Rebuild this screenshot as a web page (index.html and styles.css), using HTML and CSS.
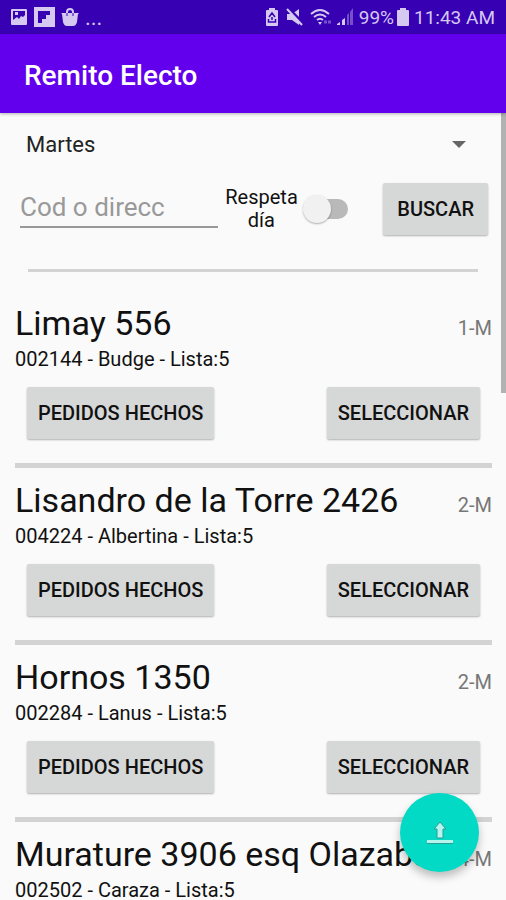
FILE: index.html
```
<!DOCTYPE html>
<html lang="es">
<head>
  <meta charset="UTF-8">
  <meta name="viewport" content="width=device-width, initial-scale=1">
  <title>Remito Electo</title>
  <link rel="stylesheet" href="styles.css">
</head>
<body>
  <div class="status-bar">
    <div class="status-left">
      <svg width="18" height="18" viewBox="0 0 18 18" fill="currentColor"><path fill-rule="evenodd" d="M2 1h14a1 1 0 0 1 1 1v14a1 1 0 0 1-1 1H2a1 1 0 0 1-1-1V2a1 1 0 0 1 1-1zm1 2v9l4-3 2 2 2-3 2 1 2-2V3zM5 4h3v3H5z"/></svg>
      <svg width="21" height="20" viewBox="0 0 21 20" fill="currentColor"><path fill-rule="evenodd" d="M0 0h21v20H0zM4 4v12h4v-4h4V8h4V4z"/></svg>
      <svg width="18" height="19" viewBox="0 0 18 19"><path d="M0 5h18l-1 1-1 8q-1 4-4 4H6q-3 0-4-4L1 6z" fill="currentColor"/><path d="M6 6V4q0-3 3-3t3 3v2" fill="none" stroke="currentColor" stroke-width="2"/><path d="M6 5v3M12 5v3" stroke="#3700b3"/></svg>
      <span class="more">...</span>
    </div>
    <div class="status-right">
      <svg width="14" height="18" viewBox="0 0 14 18"><path d="M4 0h6v2h2q1 0 1 1v14q0 1-1 1H2q-1 0-1-1V3q0-1 1-1h2z" fill="currentColor"/><path d="M4 9l3-4 3 4M3.500 11v3h7v-3M7 9v3" fill="none" stroke="#3700b3" stroke-width="1.500"/></svg>
      <svg class="mute" width="17" height="18" viewBox="0 0 17 18"><path d="M1 6h5l7-5v16l-7-5H1z" fill="currentColor"/><path d="M2 0l15 15" stroke="#3700b3" stroke-width="3"/><path d="M1 1l15 16" stroke="currentColor" stroke-width="2"/></svg>
      <svg class="wifi" width="22" height="18" viewBox="0 0 22 18" fill="none" stroke="currentColor" stroke-width="2"><path d="M1 6q9-8 18 0M4 9q6-5 12 0M7 12q3-2.500 6 0"/><path d="M8 14h4l-2 3z" fill="currentColor" stroke="none"/><path d="M14 14h3M18 14h3" stroke-opacity=".4" stroke-width="3"/></svg>
      <svg width="18" height="18" viewBox="0 0 18 18" fill="currentColor"><path d="M1 16l3-2v3H1zM6 12l3-2v7H6z"/><path d="M11 7l2-2v12h-2zM14 4l3-4v17h-3z" opacity=".4"/></svg>
      <span class="percent">99%</span>
      <svg width="12" height="18" viewBox="0 0 12 18" fill="currentColor"><path d="M3 0h6v2h2q1 0 1 1v14q0 1-1 1H1q-1 0-1-1V3q0-1 1-1h2z"/></svg>
      <span class="time">11:43 AM</span>
    </div>
  </div>

  <header class="app-bar">
    <h1>Remito Electo</h1>
  </header>

  <main class="content">
    <form class="search" onsubmit="return false">
      <select class="day" aria-label="Día">
        <option>Lunes</option>
        <option selected>Martes</option>
        <option>Miércoles</option>
        <option>Jueves</option>
        <option>Viernes</option>
      </select>
      <div class="search-row">
        <input class="query" type="text" placeholder="Cod o direcc" aria-label="Cod o direcc">
        <label class="respeta" for="respeta">Respeta día</label>
        <input class="switch" type="checkbox" role="switch" id="respeta">
        <button class="btn btn-search" type="submit">BUSCAR</button>
      </div>
    </form>

    <ul class="list">
      <li class="item">
        <div class="item-head"><h2>Limay 556</h2><span class="order">1-M</span></div>
        <p>002144 - Budge - Lista:5</p>
        <div class="actions">
          <button class="btn">PEDIDOS HECHOS</button>
          <button class="btn">SELECCIONAR</button>
        </div>
      </li>
      <li class="item">
        <div class="item-head"><h2>Lisandro de la Torre 2426</h2><span class="order">2-M</span></div>
        <p>004224 - Albertina - Lista:5</p>
        <div class="actions">
          <button class="btn">PEDIDOS HECHOS</button>
          <button class="btn">SELECCIONAR</button>
        </div>
      </li>
      <li class="item">
        <div class="item-head"><h2>Hornos 1350</h2><span class="order">2-M</span></div>
        <p>002284 - Lanus - Lista:5</p>
        <div class="actions">
          <button class="btn">PEDIDOS HECHOS</button>
          <button class="btn">SELECCIONAR</button>
        </div>
      </li>
      <li class="item">
        <div class="item-head"><h2>Murature 3906 esq Olazabal</h2><span class="order">4-M</span></div>
        <p>002502 - Caraza - Lista:5</p>
      </li>
    </ul>
    <div class="scrollbar"></div>
  </main>

  <button class="fab" aria-label="Subir">
    <svg width="28" height="24" viewBox="0 0 28 24"><path d="M14 1l6 7h-3v9h-6V8H8z" fill="#b5f5ee" stroke="#2a9d92"/><path d="M1 19h26v3H1z" fill="#b5f5ee"/><path d="M1 22.500h26" stroke="#2a9d92"/></svg>
  </button>
</body>
</html>
```

FILE: styles.css
```
* { box-sizing: border-box; }
body {
  margin: 0;
  height: 100vh;
  display: flex;
  flex-direction: column;
  overflow: hidden;
  background: #fafafa;
  color: #111;
  font-family: Roboto, sans-serif;
}
h1, h2, p, ul { margin: 0; padding: 0; }
svg { display: block; flex: none; }

/* status bar */
.status-bar {
  flex: none;
  height: 34px;
  padding: 0 11px 0 10px;
  display: flex;
  justify-content: space-between;
  align-items: center;
  background: #3700b3;
  color: #d5c8f1;
  font-size: 19px;
}
.status-left, .status-right { display: flex; align-items: center; }
.status-left { gap: 6px; }
.more { font-size: 22px; }
.mute { margin: 0 7px; }
.wifi { margin-right: 4px; }
.percent { margin: 0 3px 0 5px; }
.time { margin-left: 5px; }

.app-bar {
  flex: none;
  height: 79px;
  padding: 4px 24px 0;
  display: flex;
  align-items: center;
  background: #6200ee;
  color: #fff;
  box-shadow: 0 1px 3px rgba(0,0,0,.3);
  z-index: 1;
}
.app-bar h1 { font-size: 28px; font-weight: 500; }

.content {
  flex: 1;
  min-height: 0;
  position: relative;
  overflow: hidden;
}
.scrollbar {
  position: absolute;
  top: 0;
  right: 0;
  width: 5px;
  height: 280px;
  background: #b2b2b2;
}

/* search form */
.search { padding: 9px 18px 0 20px; }
.day {
  display: block;
  width: 100%;
  height: 44px;
  padding: 0 6px;
  appearance: none;
  border: none;
  font: 22px Roboto, sans-serif;
  color: #222;
  background: url("data:image/svg+xml,%3Csvg xmlns='http://www.w3.org/2000/svg' width='14' height='7'%3E%3Cpath d='M0 0h14L7 7z' fill='%23666'/%3E%3C/svg%3E") no-repeat right 22px center;
}
.search-row {
  display: flex;
  align-items: center;
  height: 86px;
}
.query {
  flex: 1;
  min-width: 0;
  height: 38px;
  padding: 0 0 2px;
  border: none;
  border-bottom: 2px solid #999;
  background: none;
  font: 26px Roboto, sans-serif;
}
.query::placeholder { color: #999; opacity: 1; }
.respeta {
  width: 72px;
  margin-left: 7px;
  text-align: center;
  font-size: 20px;
  line-height: 23px;
}
.switch {
  appearance: none;
  position: relative;
  width: 45px;
  height: 28px;
  margin: 0 35px 0 6px;
}
.switch::before {
  content: "";
  position: absolute;
  inset: 4px 0 4px 6px;
  border-radius: 10px;
  background: #b9b9b9;
}
.switch::after {
  content: "";
  position: absolute;
  left: 0;
  top: 0;
  width: 28px;
  height: 28px;
  border-radius: 50%;
  background: #f1f1f1;
  box-shadow: 0 1px 2px rgba(0,0,0,.3);
}
.switch:checked::after { left: 17px; }

.btn {
  height: 52px;
  padding: 0 11px;
  border: none;
  border-radius: 2px;
  background: #d6d7d7;
  color: #111;
  font: 500 20px Roboto, sans-serif;
  box-shadow: 0 1px 2px rgba(0,0,0,.3);
  cursor: pointer;
}
.btn-search { padding: 0 14px; }

/* address list */
.list {
  margin-top: 17px;
  list-style: none;
}
.list::before {
  content: "";
  display: block;
  height: 3px;
  margin: 0 28px 19px;
  background: #d3d3d3;
}
.item {
  margin: 0 14px 0 15px;
  padding-top: 12px;
  border-bottom: 5px solid #d3d3d3;
}
.item-head {
  display: flex;
  justify-content: space-between;
  align-items: baseline;
  white-space: nowrap;
}
.item h2 { font-size: 34px; font-weight: 400; line-height: 40px; }
.order { font-size: 20px; color: #777; }
.item p { margin-top: 4px; font-size: 20px; line-height: 24px; }
.actions {
  display: flex;
  justify-content: space-between;
  padding: 16px 12px 24px;
}

.fab {
  position: fixed;
  right: 27px;
  bottom: 28px;
  width: 79px;
  height: 79px;
  padding: 0;
  border: none;
  border-radius: 50%;
  display: flex;
  justify-content: center;
  align-items: center;
  background: #03dac5;
  box-shadow: 0 5px 9px rgba(0,0,0,.25);
}
```
